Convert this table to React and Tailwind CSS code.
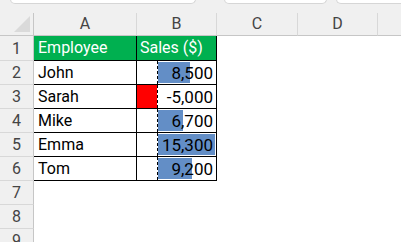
import React from 'react';

const rows = [
  { name: 'John', sales: 8500 },
  { name: 'Sarah', sales: -5000 },
  { name: 'Mike', sales: 6700 },
  { name: 'Emma', sales: 15300 },
  { name: 'Tom', sales: 9200 },
];

const MAX = 15300;
const POS_SPAN = 57; // px from the axis to the cell edge
const fmt = (n) => n.toLocaleString('en-US');

const ColHead = ({ label, last }) => (
  <div className={`h-[23px] border-b border-[#c6c6c6] flex items-center justify-center text-[16px] text-[#444] ${last ? '' : 'border-r border-r-[#d8d8d8]'}`}>
    {label}
  </div>
);

const RowHead = ({ n, tall }) => (
  <div className={`${tall ? 'h-[25px]' : 'h-[24px]'} bg-[#f0f0f0] border-r border-b border-r-[#c6c6c6] border-b-[#d8d8d8] flex items-end justify-center pb-[2px] leading-[18px] text-[16px] text-[#444]`}>
    {n}
  </div>
);

const SalesCell = ({ value }) => {
  const w = Math.round((Math.abs(value) / MAX) * POS_SPAN);
  return (
    <div className="relative h-[24px] border-r border-b border-black">
      {value >= 0 ? (
        <div className="absolute top-[1px] bottom-[1px] left-[21px] bg-[#638ec6]" style={{ width: w }} />
      ) : (
        <div className="absolute top-0 bottom-0 bg-[#ff0000]" style={{ width: w + 1, left: 19 - w }} />
      )}
      <div className="absolute top-0 bottom-0 left-[20px] border-l border-dashed border-black" />
      <div className="relative h-full flex items-end justify-end pr-[3px] pb-[1px] leading-[20px] text-[17px] text-black">{fmt(value)}</div>
    </div>
  );
};

export default function App() {
  return (
    <div className="w-[401px] h-[242px] overflow-hidden bg-white font-['Roboto',Arial,sans-serif]">
      {/* sheet tabs strip */}
      <div className="h-[13px] bg-[#f0f0f0] flex items-start">
        <div className="ml-[10px] w-[186px] h-[5px] -mt-px bg-white border border-[#d6d6d6] rounded-b-[5px]" />
        <div className="ml-[28px] w-[103px] h-[5px] -mt-px bg-white border border-[#d6d6d6] rounded-b-[5px]" />
        <div className="ml-[9px] flex-1 h-[5px] -mt-px bg-white border border-r-0 border-[#d6d6d6] rounded-bl-[5px]" />
      </div>

      <div className="grid grid-cols-[34px_103px_80px_81px_80px_1fr]">
        {/* column headers */}
        <div className="h-[23px] bg-[#f0f0f0] border-r border-b border-[#c6c6c6] relative overflow-hidden">
          <div className="absolute right-[3px] bottom-[3px] w-0 h-0 border-l-[16px] border-l-transparent border-b-[16px] border-b-[#dadada]" />
        </div>
        {['A', 'B', 'C', 'D'].map((c) => (
          <div key={c} className="bg-[#f0f0f0]"><ColHead label={c} /></div>
        ))}
        <div className="bg-[#f0f0f0]"><ColHead label="" last /></div>

        {/* header row */}
        <RowHead n={1} tall />
        <div className="h-[25px] bg-[#00b050] border-r border-b border-black flex items-end pb-[2px] leading-[20px] pl-[4px] text-[16px] text-white">Employee</div>
        <div className="h-[25px] bg-[#00b050] border-r border-b border-black flex items-end pb-[2px] leading-[20px] pl-[3px] text-[16px] text-white">Sales ($)</div>
        <div className="h-[25px]" />
        <div />
        <div />

        {rows.map((r, i) => (
          <React.Fragment key={r.name}>
            <RowHead n={i + 2} />
            <div className="h-[24px] border-r border-b border-black flex items-end pb-[1px] leading-[20px] pl-[4px] text-[16px] text-black">{r.name}</div>
            <SalesCell value={r.sales} />
            <div />
            <div />
            <div />
          </React.Fragment>
        ))}

        {[7, 8, 9].map((n) => (
          <React.Fragment key={n}>
            <RowHead n={n} />
            <div className="col-span-5" />
          </React.Fragment>
        ))}
      </div>
    </div>
  );
}
